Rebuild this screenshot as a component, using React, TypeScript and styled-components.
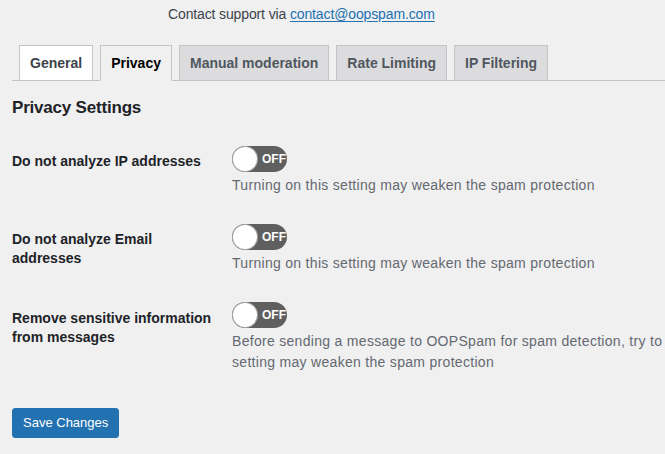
import React from "react";
import styled, { createGlobalStyle } from "styled-components";

const GlobalStyle = createGlobalStyle`
  html, body {
    margin: 0;
    padding: 0;
    background: #f0f0f1;
    overflow: hidden;
  }
  body {
    font-family: "Liberation Sans", Arial, sans-serif;
    color: #1d2327;
    font-size: 14px;
  }
`;

const Page = styled.div`
  width: 665px;
  height: 454px;
  overflow: hidden;
`;

const Support = styled.p`
  margin: 0;
  padding: 4px 0 0 168px;
  font-size: 14px;
  line-height: 20px;
  letter-spacing: -0.13px;
  color: #3c434a;

  a {
    color: #2271b1;
    text-decoration: underline;
    text-underline-offset: 2px;
  }
`;

const TabBar = styled.nav`
  display: flex;
  align-items: flex-end;
  margin: 21px 0 0 12px;
  border-bottom: 1px solid #c3c4c7;
`;

const Tab = styled.a<{ $active?: boolean; $hover?: boolean }>`
  margin-left: 7px;
  margin-bottom: ${(p) => (p.$active ? "-1px" : "0")};
  padding: 5px 10px;
  font-size: 14px;
  line-height: 24px;
  font-weight: 700;
  white-space: nowrap;
  border: 1px solid #c3c4c7;
  border-bottom: ${(p) => (p.$active ? "1px solid #f0f0f1" : "none")};
  background: ${(p) => (p.$active ? "#f0f0f1" : p.$hover ? "#fff" : "#dcdcde")};
  color: ${(p) => (p.$active ? "#000" : p.$hover ? "#3c434a" : "#50575e")};
  text-decoration: none;
  cursor: pointer;
`;

const Content = styled.div`
  padding: 0 0 0 12px;
`;

const Heading = styled.h2`
  margin: 16px 0 0;
  font-size: 17px;
  line-height: 22px;
  font-weight: 700;
  letter-spacing: -0.2px;
  color: #1d2327;
`;

const Rows = styled.div`
  display: flex;
  flex-direction: column;
  gap: 28px;
  margin-top: 27px;
`;

const Row = styled.div`
  display: grid;
  grid-template-columns: 220px 1fr;
  align-items: start;
`;

const Label = styled.div<{ $offset?: number }>`
  padding-top: ${(p) => p.$offset ?? 6}px;
  padding-right: 10px;
  font-size: 14px;
  line-height: 19px;
  font-weight: 700;
  color: #1d2327;
`;

const Field = styled.div`
  display: flex;
  flex-direction: column;
  align-items: flex-start;
`;

const Track = styled.span`
  display: flex;
  align-items: center;
  gap: 5px;
  box-sizing: border-box;
  width: 55px;
  height: 26px;
  padding: 1px;
  border-radius: 13px;
  background: #5f5f5f;
  cursor: pointer;
`;

const Knob = styled.span`
  width: 24px;
  height: 24px;
  border-radius: 50%;
  background: #fff;
  box-shadow: 0 0 0 1px #a7a7a7;
`;

const ToggleText = styled.span`
  font-size: 12px;
  font-weight: 700;
  color: #fff;
  line-height: 1;
`;

const Description = styled.p`
  margin: 3px 0 0;
  font-size: 14px;
  line-height: 21px;
  letter-spacing: 0.3px;
  color: #646970;
  white-space: nowrap;
`;

const SaveButton = styled.button`
  margin-top: 35px;
  height: 30px;
  padding: 0 10px;
  border: 1px solid #2271b1;
  border-radius: 3px;
  background: #2271b1;
  color: #fff;
  font-family: inherit;
  font-size: 13px;
  line-height: 28px;
  cursor: pointer;
`;

const Toggle = () => (
  <Track role="switch" aria-checked={false}>
    <Knob />
    <ToggleText>OFF</ToggleText>
  </Track>
);

type Setting = {
  label: string;
  lines: string[];
  offset?: number;
};

const settings: Setting[] = [
  {
    label: "Do not analyze IP addresses",
    lines: ["Turning on this setting may weaken the spam protection"],
  },
  {
    label: "Do not analyze Email addresses",
    lines: ["Turning on this setting may weaken the spam protection"],
  },
  {
    label: "Remove sensitive information from messages",
    lines: [
      "Before sending a message to OOPSpam for spam detection, try to remove sensitive information from its content. Turning on this",
      "setting may weaken the spam protection",
    ],
    offset: 7,
  },
];

const tabs = ["General", "Privacy", "Manual moderation", "Rate Limiting", "IP Filtering"];

export default function App() {
  return (
    <Page>
      <GlobalStyle />
      <Support>
        Contact support via <a href="#">contact@oopspam.com</a>
      </Support>
      <TabBar>
        {tabs.map((t) => (
          <Tab key={t} $active={t === "Privacy"} $hover={t === "General"}>
            {t}
          </Tab>
        ))}
      </TabBar>
      <Content>
        <Heading>Privacy Settings</Heading>
        <Rows>
          {settings.map((s) => (
            <Row key={s.label}>
              <Label $offset={s.offset}>{s.label}</Label>
              <Field>
                <Toggle />
                <Description>
                  {s.lines.map((l, i) => (
                    <React.Fragment key={i}>
                      {i > 0 && <br />}
                      {l}
                    </React.Fragment>
                  ))}
                </Description>
              </Field>
            </Row>
          ))}
        </Rows>
        <SaveButton>Save Changes</SaveButton>
      </Content>
    </Page>
  );
}
